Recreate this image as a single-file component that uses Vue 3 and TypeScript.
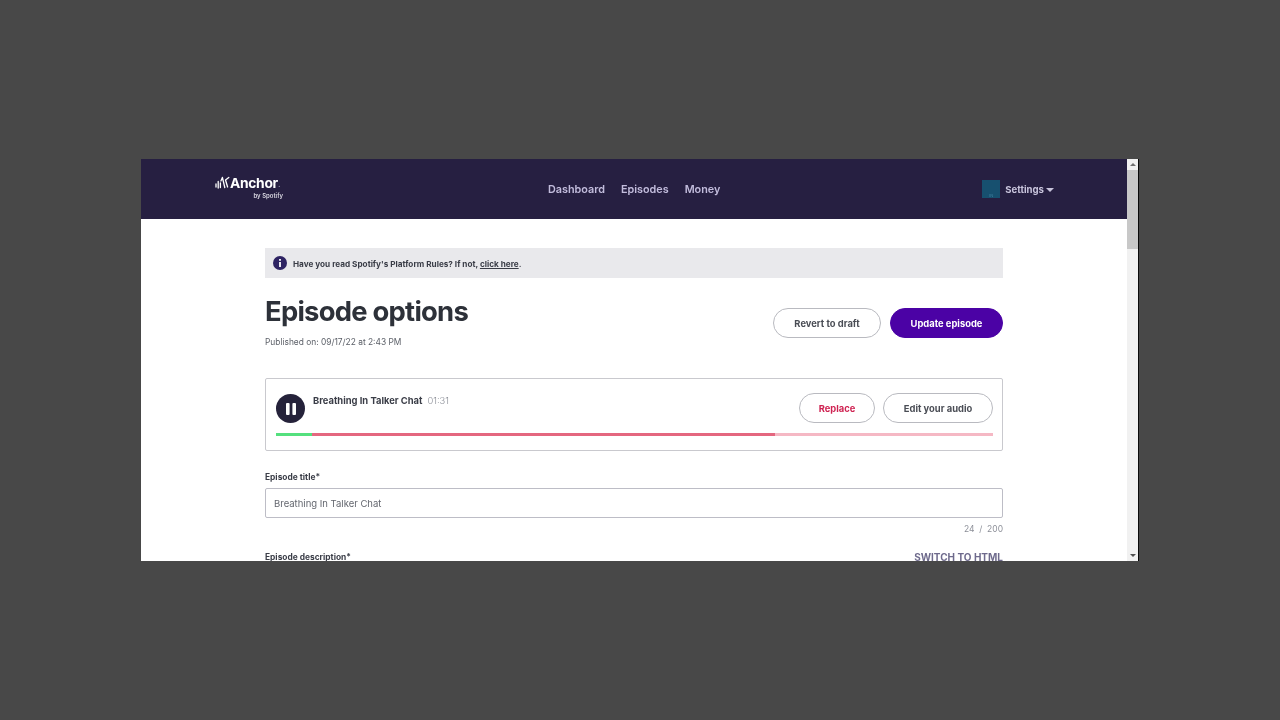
<template>
  <div class="desktop">
    <div class="window">
      <div class="page">
        <header class="topbar">
          <div class="logo">
            <div class="logo-row">
              <svg class="logo-mark" width="15" height="13" viewBox="0 0 15 13" fill="none" stroke="#fff" stroke-width="1.3" stroke-linecap="round">
                <path d="M1 8v3M3.2 5.5V12M5.4 7v4.5M7.4 1.5 5.9 5M7.4 1.5 9.8 11.5M10.5 4 13.8 1.5M10.5 4 12.6 11" />
              </svg>
              <span class="logo-name">Anchor</span><span class="logo-dot">.</span>
            </div>
            <div class="logo-sub">by Spotify</div>
          </div>
          <nav class="nav">
            <a v-for="item in navItems" :key="item">{{ item }}</a>
          </nav>
          <div class="account">
            <div class="avatar"><span>IN</span></div>
            <span class="settings">Settings</span>
            <span class="caret"></span>
          </div>
        </header>

        <main class="content">
          <div class="notice">
            <svg width="14" height="14" viewBox="0 0 14 14">
              <circle cx="7" cy="7" r="7" fill="#2e2463" />
              <rect x="6.1" y="6" width="1.8" height="5" fill="#fff" />
              <rect x="6.1" y="3" width="1.8" height="1.8" fill="#fff" />
            </svg>
            <span>Have you read Spotify's Platform Rules? If not, <u>click here</u>.</span>
          </div>

          <div class="title-row">
            <div>
              <h1>Episode options</h1>
              <p class="published">Published on: 09/17/22 at 2:43 PM</p>
            </div>
            <div class="actions">
              <button class="pill revert">Revert to draft</button>
              <button class="pill update">Update episode</button>
            </div>
          </div>

          <section class="player">
            <div class="player-top">
              <button class="pause" aria-label="Pause">
                <svg width="10" height="12" viewBox="0 0 10 12" fill="#fff">
                  <rect x="0" y="0" width="3.6" height="12" rx="1" />
                  <rect x="6.4" y="0" width="3.6" height="12" rx="1" />
                </svg>
              </button>
              <div class="track">
                <strong>Breathing In Talker Chat</strong>
                <span>01:31</span>
              </div>
              <button class="pill replace">Replace</button>
              <button class="pill edit">Edit your audio</button>
            </div>
            <div class="progress">
              <div
                v-for="seg in segments"
                :key="seg.color"
                :style="{ width: seg.width + 'px', background: seg.color }"
              ></div>
            </div>
          </section>

          <label class="field-label">Episode title*</label>
          <div class="text-input">Breathing In Talker Chat</div>
          <div class="counter">24 &nbsp;/&nbsp; 200</div>

          <div class="desc-row">
            <label class="field-label">Episode description*</label>
            <a class="switch">SWITCH TO HTML</a>
          </div>
        </main>
      </div>

      <aside class="scrollbar">
        <span class="arrow up"></span>
        <div class="track-area"><div class="thumb"></div></div>
        <span class="arrow down"></span>
      </aside>
    </div>
  </div>
</template>

<script setup lang="ts">
const navItems: string[] = ['Dashboard', 'Episodes', 'Money']

const segments: { width: number; color: string }[] = [
  { width: 36, color: '#54e07e' },
  { width: 463, color: '#e4677f' },
  { width: 218, color: '#f5b8c4' }
]
</script>

<style>
html,
body {
  margin: 0;
  background: #484848;
}
</style>

<style scoped>
.desktop {
  width: 1280px;
  height: 720px;
  box-sizing: border-box;
  padding: 159px 0 0 141px;
  background: #484848;
  font-family: Inter, "Liberation Sans", sans-serif;
  overflow: hidden;
}
.window {
  width: 998px;
  height: 402px;
  display: flex;
  background: #fff;
  overflow: hidden;
  filter: blur(0.4px);
}
.page {
  width: 986px;
  flex: none;
  overflow: hidden;
}
.topbar {
  height: 60px;
  box-sizing: border-box;
  display: flex;
  align-items: center;
  background: #261f41;
  position: relative;
}
.logo {
  margin-left: 74px;
  width: 68px;
  color: #fff;
  margin-top: -4px;
}
.logo-row {
  display: flex;
  align-items: center;
  height: 15px;
}
.logo-mark {
  margin-right: 0;
}
.logo-name {
  font-size: 13.8px;
  font-weight: 700;
  letter-spacing: -0.3px;
}
.logo-dot {
  font-size: 9px;
  color: #8d88a0;
  align-self: flex-end;
  margin-bottom: 1px;
}
.logo-sub {
  font-size: 6px;
  font-weight: 600;
  text-align: right;
  margin-top: 2px;
  color: #d8d6e0;
}
.nav {
  display: flex;
  gap: 16px;
  margin-left: 265px;
}
.nav a {
  color: #c2bcdc;
  font-size: 10.8px;
  font-weight: 600;
}
.account {
  display: flex;
  align-items: center;
  margin-left: auto;
  margin-right: 73px;
}
.avatar {
  width: 18px;
  height: 18px;
  background: #17506f;
  display: flex;
  align-items: flex-end;
  justify-content: center;
  margin-right: 5px;
}
.avatar span {
  font-size: 4px;
  color: #3f7f9f;
}
.settings {
  color: #c8c4dc;
  font-size: 9.6px;
  font-weight: 700;
}
.caret {
  margin-left: 2px;
  margin-top: 1px;
  border-left: 4px solid transparent;
  border-right: 4px solid transparent;
  border-top: 4px solid #c8c4dc;
}
.content {
  width: 738px;
  margin-left: 124px;
  padding-top: 29px;
  color: #292f36;
}
.notice {
  height: 30px;
  display: flex;
  align-items: center;
  gap: 6px;
  padding-left: 8px;
  background: #e9e9ec;
  font-size: 8.2px;
  font-weight: 700;
  color: #3a3d47;
}
.notice span {
  margin-top: 1px;
}
.title-row {
  display: flex;
  justify-content: space-between;
  height: 100px;
}
h1 {
  margin: 15px 0 0;
  font-size: 27.4px;
  line-height: 36px;
  font-weight: 700;
  letter-spacing: -0.75px;
  color: #2d3139;
}
.published {
  margin: 7px 0 0;
  font-size: 8.4px;
  line-height: 12px;
  color: #5c6068;
}
.actions {
  display: flex;
  gap: 9px;
  margin-top: 30px;
  align-items: flex-start;
}
.pill {
  height: 30px;
  box-sizing: border-box;
  border-radius: 15px;
  border: 1px solid #b9bac0;
  background: #fff;
  font-family: inherit;
  font-size: 9.4px;
  font-weight: 700;
  color: #4a4d55;
  padding: 0;
}
.revert {
  width: 108px;
}
.update {
  width: 113px;
  background: #4b02a5;
  border-color: #4b02a5;
  color: #fff;
}
.player {
  height: 73px;
  box-sizing: border-box;
  border: 1px solid #c9c9ce;
  border-radius: 2px;
  padding: 14px 9px 0 10px;
}
.player-top {
  display: flex;
  align-items: flex-start;
  height: 40px;
}
.pause {
  width: 29px;
  height: 29px;
  margin-top: 1px;
  border: 0;
  border-radius: 50%;
  background: #25223a;
  display: flex;
  align-items: center;
  justify-content: center;
  padding: 0;
}
.track {
  flex: 1;
  margin-left: 8px;
  margin-top: 2px;
  font-size: 9.4px;
  line-height: 12px;
}
.track strong {
  font-weight: 700;
  color: #3a3d47;
}
.track span {
  margin-left: 5px;
  color: #8c8f98;
  font-weight: 300;
}
.replace {
  width: 76px;
  color: #cf2352;
}
.edit {
  width: 110px;
  margin-left: 8px;
}
.progress {
  display: flex;
  height: 3px;
  margin-top: 0;
}
.field-label {
  display: block;
  font-size: 8.4px;
  line-height: 12px;
  font-weight: 700;
  color: #3a3d47;
}
.player + .field-label {
  margin-top: 20px;
}
.text-input {
  margin-top: 5px;
  height: 30px;
  box-sizing: border-box;
  border: 1px solid #bdbdc6;
  border-radius: 2px;
  padding-left: 8px;
  display: flex;
  align-items: center;
  font-size: 9.5px;
  color: #63666e;
}
.counter {
  margin-top: 5px;
  text-align: right;
  font-size: 8.5px;
  line-height: 12px;
  color: #8c8f98;
}
.desc-row {
  display: flex;
  justify-content: space-between;
  align-items: center;
  margin-top: 16px;
}
.switch {
  font-size: 10px;
  line-height: 12px;
  font-weight: 700;
  color: #6e6a8c;
}
.scrollbar {
  flex: 1;
  background: #f1f1f1;
  border-right: 1px solid #0a0a0a;
  display: flex;
  flex-direction: column;
  align-items: center;
}
.arrow {
  flex: none;
  width: 0;
  height: 0;
  border-left: 3px solid transparent;
  border-right: 3px solid transparent;
}
.arrow.up {
  margin: 4px 0 4px;
  border-bottom: 3px solid #707070;
}
.arrow.down {
  margin: 3px 0 4px;
  border-top: 3px solid #505050;
}
.track-area {
  flex: 1;
  width: 100%;
}
.thumb {
  height: 79px;
  background: #c8c8c8;
}
</style>
